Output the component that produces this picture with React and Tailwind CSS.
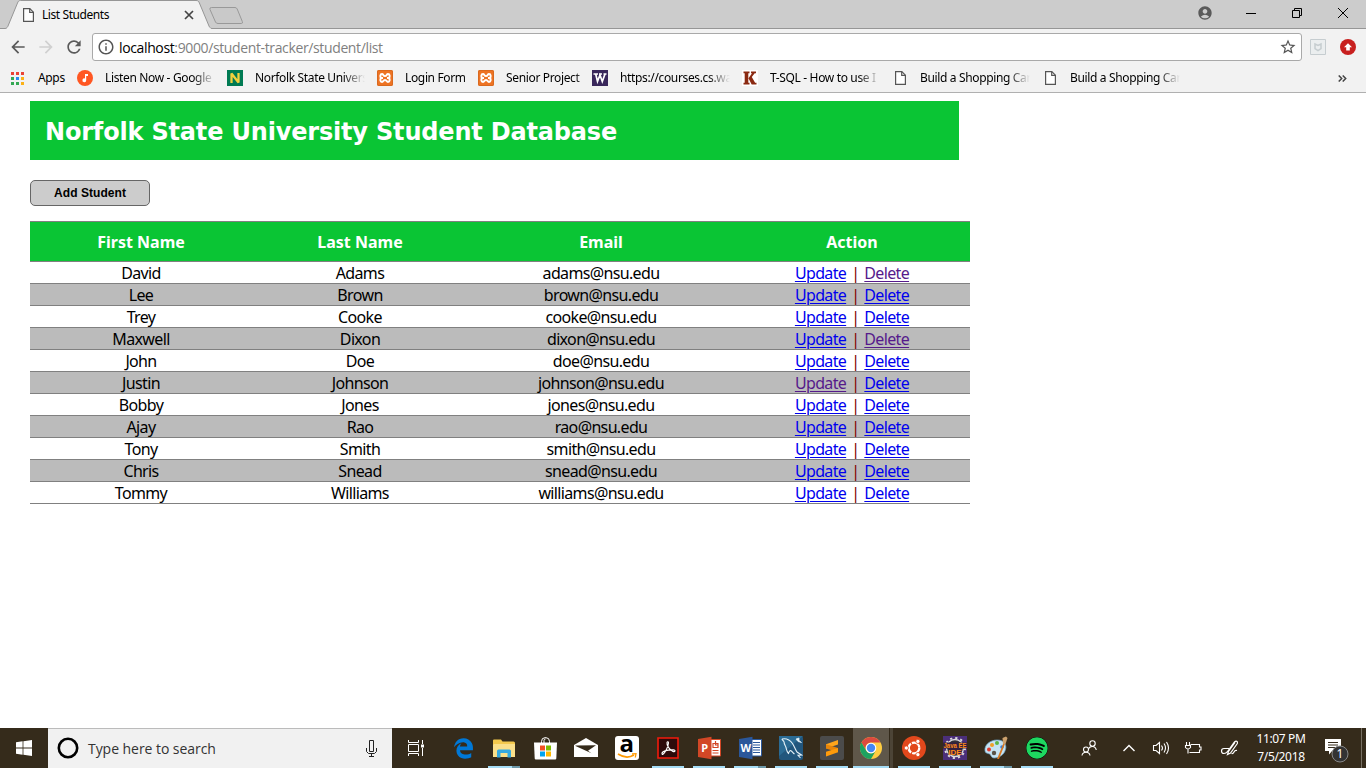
import { MdAccountCircle, MdArrowBack, MdArrowForward, MdRefresh, MdInfoOutline, MdStarBorder } from "react-icons/md";
import { FaEdgeLegacy, FaSpotify } from "react-icons/fa";

const students = [
  ["David", "Adams", "adams@nsu.edu", false, true],
  ["Lee", "Brown", "brown@nsu.edu"],
  ["Trey", "Cooke", "cooke@nsu.edu"],
  ["Maxwell", "Dixon", "dixon@nsu.edu", false, true],
  ["John", "Doe", "doe@nsu.edu"],
  ["Justin", "Johnson", "johnson@nsu.edu", true, false],
  ["Bobby", "Jones", "jones@nsu.edu"],
  ["Ajay", "Rao", "rao@nsu.edu"],
  ["Tony", "Smith", "smith@nsu.edu"],
  ["Chris", "Snead", "snead@nsu.edu"],
  ["Tommy", "Williams", "williams@nsu.edu"],
];

function PageIcon() {
  return (
    <svg width="11" height="14" viewBox="0 0 11 14" fill="#fff" stroke="#555" strokeWidth="1.2">
      <path d="M.6.6h6.2l3.6 3.6v9.2H.6z" />
      <path d="M6.7.8v3.6h3.6" fill="none" />
    </svg>
  );
}

function Xampp() {
  return (
    <span className="flex size-4 items-center justify-center rounded-[2px] bg-[#ee7424] ring-1 ring-inset ring-[#d9691f]">
      <svg width="12" height="12" viewBox="0 0 12 12" fill="none" stroke="#fff" strokeWidth="2" strokeLinejoin="round">
        <path d="M2 6C1 5 1 2 3 2c1.600 0 1 2 3 2s1.400-2 3-2c2 0 2 3 1 4 1 1 1 4-1 4-1.600 0-1-2-3-2s-1.400 2-3 2c-2 0-2-3-1-4zM2 6h2M8 6h2" />
      </svg>
    </span>
  );
}

function Bookmark({ icon, label, className = "w-[150px]" }) {
  return (
    <div className={`flex shrink-0 items-center ${className}`}>
      <span className="flex w-4 shrink-0 justify-center">{icon}</span>
      <span className="ml-3 w-[110px] overflow-hidden whitespace-nowrap mask-r-from-80% mask-r-to-100%">{label}</span>
    </div>
  );
}

function TabStrip() {
  return (
    <div className="relative flex h-[29px] items-start bg-[#cccccc]">
      <svg className="absolute inset-0" width="1366" height="29" viewBox="0 0 1366 29">
        <path d="M0 28.500H5C7 28.500 7.500 27 8 26L17.500 3C18.200 1.200 19 .5 20.500.5H196C198 .5 198.700 1.200 199.400 3L209 26C209.700 27.700 210.500 28.500 212 28.500H1366V30H0z" fill="#f2f2f2" stroke="#969696" />
        <path d="M7 28.500H210.500" stroke="#f2f2f2" strokeWidth="1.400" />
        <path d="M211.500 7.500H235Q236.500 7.500 237.200 9L242.300 21.500Q243 23.500 241.500 23.500H218Q216.200 23.500 215.500 22L210 9.500Q209.300 7.500 211.500 7.500z" fill="#c9c9c9" stroke="#999" />
      </svg>
      <div className="relative flex h-[29px] w-[199px] items-center pl-[23px] pt-px">
        <PageIcon />
        <span className="ml-2 flex-1 text-[12px] tracking-[-0.42px] text-black">List Students</span>
        <svg width="10" height="10" viewBox="0 0 10 10" stroke="#444" strokeWidth="1.700" className="mr-[5px]">
          <path d="M1 1l8 8M9 1L1 9" />
        </svg>
      </div>
      <div className="relative ml-auto flex h-[26px] items-center">
        <MdAccountCircle className="mr-[33px] size-4 text-[#5a5a5a]" />
        <svg width="102" height="12" viewBox="0 0 102 12" className="mr-[18px]" fill="none" stroke="#000">
          <path d="M0 6.500h10M46.500 3.500h7v7h-7zM48.500 3.500v-2h7v7h-2M92 1l10 10M102 1L92 11" />
        </svg>
      </div>
    </div>
  );
}

function Toolbar() {
  return (
    <div className="flex h-8 items-center pt-1">
      <MdArrowBack className="ml-2 size-5 text-[#5a5a5a]" />
      <MdArrowForward className="ml-2 size-5 text-[#d0d0d0]" />
      <MdRefresh className="ml-2 size-5 text-[#5a5a5a]" />
      <div className="ml-2 flex h-7 w-[1210px] items-center rounded-[3px] border border-[#a9a9a9] bg-white">
        <MdInfoOutline className="ml-1 size-[18px] text-[#555]" />
        <span className="ml-1 flex-1 font-['Open_Sans',sans-serif] text-[14px] tracking-[-0.37px] text-[#7f7f7f]">
          <span className="text-black">localhost</span>:9000/student-tracker/student/list
        </span>
        <MdStarBorder className="mr-1 size-[18px] text-[#555]" />
      </div>
      <svg width="16" height="16" viewBox="0 0 16 16" className="ml-2" fill="none" stroke="#c6cdd0">
        <path d="M.5.5h15v15H.5z" fill="#ebeeef" />
        <path d="M5 5v4.500l3 2 3-2V5L8 6.500z" strokeWidth="1.500" />
      </svg>
      <svg width="16" height="16" viewBox="0 0 16 16" className="ml-[14px]">
        <circle cx="8" cy="8" r="8" fill="#c8201f" />
        <path d="M8 4.200L12 8.300H9.800V11.500H6.200V8.300H4z" fill="#fff" />
      </svg>
    </div>
  );
}

function Bookmarks() {
  return (
    <div className="flex h-8 items-center border-b border-[#b0b0b0] pl-[11px] pt-[3px] text-[12px] tracking-[-0.35px] text-black">
      <svg width="13" height="13" viewBox="0 0 13 13">
        <path d="M0 0h3v3H0zM5 0h3v3H5zM10 0h3v3h-3z" fill="#ea4335" />
        <path d="M0 5h3v3H0zM0 10h3v3H0zM5 10h3v3H5z" fill="#34a853" />
        <path d="M5 5h3v3H5z" fill="#2a8cf0" />
        <path d="M10 5h3v3h-3zM10 10h3v3h-3z" fill="#fbb116" />
      </svg>
      <span className="ml-[14px] w-[39px]">Apps</span>
      <Bookmark
        label="Listen Now - Google"
        icon={
          <svg width="16" height="16" viewBox="0 0 16 16">
            <circle cx="8" cy="8" r="8" fill="#ff5722" />
            <path d="M8 4h3v2H9.200v4.200A1.900 1.900 0 1 1 8 8.500z" fill="#fff" />
          </svg>
        }
      />
      <Bookmark
        label="Norfolk State Univers"
        icon={
          <svg width="16" height="16" viewBox="0 0 16 16">
            <path d="M0 0h16v16H0z" fill="#007a53" />
            <path d="M4.500 13V3.500l7 9V3" fill="none" stroke="#f3d03e" strokeWidth="2.300" strokeLinejoin="bevel" />
          </svg>
        }
      />
      <Bookmark label="Login Form" className="w-[101px]" icon={<Xampp />} />
      <Bookmark label="Senior Project" className="w-[114px]" icon={<Xampp />} />
      <Bookmark
        label="https://courses.cs.was"
        icon={
          <svg width="16" height="16" viewBox="0 0 16 16">
            <path d="M0 0h16v16H0z" fill="#39275b" />
            <path d="M1.500 4h4.500M7 4h3M11.500 4h3M3.700 4l1.800 7.500L8 5l2.300 6.500L13 4" fill="none" stroke="#fff" strokeWidth="1.700" />
          </svg>
        }
      />
      <Bookmark
        label="T-SQL - How to use I"
        icon={
          <svg width="16" height="16" viewBox="0 0 16 16">
            <path d="M0 0h16v16H0z" fill="#fff" />
            <path d="M1.500 1.500h6v1.700H6.300v9.600h1.200v1.700h-6v-1.700h1.200V3.200H1.500zM9 1.500h5v1.700h-1.300L9.800 7l3.300 5.800h1.400v1.700H9.700L6.500 8.200 10 3.200H9z" fill="#8b2a12" />
          </svg>
        }
      />
      <Bookmark label="Build a Shopping Cart" icon={<PageIcon />} />
      <Bookmark label="Build a Shopping Cart" icon={<PageIcon />} />
      <svg width="9" height="7" viewBox="0 0 9 7" className="ml-auto mr-[19px]" fill="none" stroke="#444" strokeWidth="1.500">
        <path d="M.7.5l3 3-3 3M4.700.5l3 3-3 3" />
      </svg>
    </div>
  );
}

function ActionLink({ visited, children }) {
  return (
    <a href="#" className={`underline decoration-1 underline-offset-2 ${visited ? "text-[#551a8b]" : "text-[#0000ee]"}`}>
      {children}
    </a>
  );
}

function StudentPage() {
  return (
    <main className="h-[635px] bg-white pl-[30px] pt-2">
      <h1 className="flex h-[59px] w-[929px] items-center bg-[#0ac534] pl-[15px] pt-0.5 font-['DejaVu_Sans',sans-serif] text-[24px] font-bold tracking-[-0.18px] text-white">
        Norfolk State University Student Database
      </h1>
      <button className="mt-5 flex h-[26px] w-[120px] items-center justify-center rounded-[5px] border border-[#666] bg-[#ccc] font-['Liberation_Sans',sans-serif] text-[12px] font-bold tracking-[0.05px] text-black">
        Add Student
      </button>
      <table className="mt-[15px] w-[940px] table-fixed border-separate border-spacing-0 text-center text-[16px] leading-[20px] tracking-[-0.65px] text-black">
        <colgroup>
          <col className="w-[222px]" />
          <col className="w-[216px]" />
          <col className="w-[266px]" />
          <col className="w-[236px]" />
        </colgroup>
        <thead>
          <tr className="bg-[#0ac534] tracking-[0px] text-white">
            {["First Name", "Last Name", "Email", "Action"].map((h) => (
              <th key={h} className="h-[41px] border-y border-[#808080] p-0 pt-px font-bold">{h}</th>
            ))}
          </tr>
        </thead>
        <tbody>
          {students.map(([first, last, email, updateVisited, deleteVisited]) => (
            <tr key={email} className="even:bg-[#bbbbbb]">
              <td className="h-[22px] border-b border-[#808080] p-0 pt-px">{first}</td>
              <td className="border-b border-[#808080] p-0 pt-px">{last}</td>
              <td className="border-b border-[#808080] p-0 pt-px">{email}</td>
              <td className="border-b border-[#808080] p-0 pt-px text-[#800000]">
                <ActionLink visited={updateVisited}>Update</ActionLink>
                <span className="px-[5px]">|</span>
                <ActionLink visited={deleteVisited}>Delete</ActionLink>
              </td>
            </tr>
          ))}
        </tbody>
      </table>
    </main>
  );
}

function TaskButton({ running, split, active, children }) {
  return (
    <div className={`relative flex h-10 w-10 shrink-0 items-center justify-center ${active ? "bg-[#5f574a] pr-1" : ""}`}>
      {children}
      {running && <span className={`absolute bottom-0 h-0.5 bg-[#a5dcf5] ${active ? "inset-x-0" : "inset-x-1"}`} />}
      {split && <span className="absolute bottom-0 right-1 h-0.5 w-2 bg-[#6d98a8]" />}
      {active && <span className="absolute inset-y-0 right-0 w-1 border-l border-[#332a1b] bg-[#4c4436]" />}
    </div>
  );
}

function OfficeIcon({ color, letter, children }) {
  return (
    <svg width="23" height="24" viewBox="0 0 23 24">
      <path d="M12 3.500h10.500v16.500H12z" fill="#fff" stroke={color} />
      {children}
      <path d="M0 3L13.500.8v22.400L0 21z" fill={color} />
      <text x="6.700" y="16" textAnchor="middle" fontSize="11" fontWeight="700" fontFamily="Noto Sans, sans-serif" fill="#fff">{letter}</text>
    </svg>
  );
}

function Taskbar() {
  return (
    <footer className="flex h-10 items-center bg-[#352b1b] text-white">
      <div className="flex w-12 justify-center">
        <svg width="16" height="16" viewBox="0 0 16 16" fill="#fff">
          <path d="M0 2.200L6.600 1.300v6.300H0zM7.400 1.200L16 0v7.600H7.400zM0 8.400h6.600v6.300L0 13.800zM7.400 8.400H16V16l-8.600-1.200z" />
        </svg>
      </div>
      <div className="flex h-10 w-[344px] items-center border-t border-[#bbb] bg-[#f1f1f1] pl-[9px] text-[#333]">
        <svg width="22" height="22" viewBox="0 0 22 22" className="-mt-px"><circle cx="11" cy="11" r="9.200" fill="none" stroke="#000" strokeWidth="2.600" /></svg>
        <span className="ml-[9px] flex-1 font-['Open_Sans',sans-serif] text-[14px] tracking-[-0.05px]">Type here to search</span>
        <svg width="13" height="17" viewBox="0 0 13 17" className="mr-[14px]" fill="none" stroke="#222">
          <path d="M4.500.5h4v11h-4zM1.500 8v3.500l2 2h6l2-2V8M6.500 13.500v3M4 16.500h5" />
        </svg>
      </div>
      <svg width="17" height="16" viewBox="0 0 17 16" className="ml-4" fill="none" stroke="#fff">
        <path d="M.5 0v2.500h10V0M.5 4.500h10v7H.5zM.5 16v-2.500h10V16M14.500 0v4M14.500 8v8" />
        <path d="M13 4.500h3v3h-3z" fill="#fff" stroke="none" />
      </svg>
      <div className="ml-[18px] flex gap-px">
        <TaskButton><FaEdgeLegacy className="size-[21px] text-[#0078d7]" /></TaskButton>
        <TaskButton running split>
          <svg width="22" height="19" viewBox="0 0 22 19">
            <path d="M0 1.500Q0 .5 1 .5h7l1.500 2H20.500Q22 2.500 22 4v14H0z" fill="#f4c94e" />
            <path d="M1 5h21v13H0V6z" fill="#fbe08b" />
            <path d="M4 18.500V12q0-1.500 1.500-1.500h11q1.500 0 1.500 1.500v6.500h-3.500V14h-7v4.500z" fill="#35a9e1" />
          </svg>
        </TaskButton>
        <TaskButton>
          <svg width="23" height="23" viewBox="0 0 23 23">
            <path d="M7.500 6V4.500Q7.500.7 11 .7h1Q15.500.7 15.500 4.500V6M10 6V3.500Q10 2 11.500 2" fill="none" stroke="#fff" />
            <path d="M0 5.500h23l-.7 16q-.1 1-1.100 1H1.800q-1 0-1.100-1z" fill="#fff" />
            <path d="M6 8.500h5v5H6z" fill="#f25022" /><path d="M12 8.500h5v5h-5z" fill="#7fba00" />
            <path d="M6 14.500h5v5H6z" fill="#00a4ef" /><path d="M12 14.500h5v5h-5z" fill="#ffb900" />
          </svg>
        </TaskButton>
        <TaskButton>
          <svg width="24" height="20" viewBox="0 0 24 20"><path d="M0 7L12 0l12 7v12H0z" fill="#fff" /><path d="M1.500 7.500L22 7.200l-8 5.500 3.500 2.600L1.500 8z" fill="#352b1b" /></svg>
        </TaskButton>
        <TaskButton>
          <svg width="24" height="24" viewBox="0 0 24 24">
            <rect width="24" height="24" rx="3" fill="#fff" />
            <text x="11.700" y="16" textAnchor="middle" fontSize="24" fontWeight="700" fontFamily="Open Sans, sans-serif" fill="#000">a</text>
            <path d="M3 18q8.500 5.500 16 1" fill="none" stroke="#ff9900" strokeWidth="1.700" />
            <path d="M17 18l4-.3-.7 3.800" fill="none" stroke="#ff9900" strokeWidth="1.300" />
          </svg>
        </TaskButton>
        <TaskButton running>
          <svg width="22" height="22" viewBox="0 0 22 22">
            <path d="M1 1h20v20H1z" fill="#2d0b0b" stroke="#f21b0c" strokeWidth="1.600" />
            <path d="M5 16.500c0-2.500 6-4 11.500-3.600 2.500.4 1.700 2.200-.6 1.500C12.500 13 9.500 8 10 5.500c.2-1.200 1.600-1 1.500.5C11.300 9.500 8 16 6 17.200c-.6.400-1 0-1-.7z" fill="none" stroke="#fff" strokeWidth="1.100" />
          </svg>
        </TaskButton>
        <TaskButton running>
          <OfficeIcon color="#d24726" letter="P"><path d="M15 7.500h5v4h-5zM14.500 14.500h6M14.500 17h6M17.500 5v4h3" fill="none" stroke="#d24726" strokeWidth="1.200" /></OfficeIcon>
        </TaskButton>
        <TaskButton running split>
          <OfficeIcon color="#2b579a" letter="W"><path d="M14 6.500h7M14 9h7M14 11.500h7M14 14h7M14 16.500h7" stroke="#2b579a" /></OfficeIcon>
        </TaskButton>
        <TaskButton running>
          <svg width="24" height="24" viewBox="0 0 24 24" fill="none" stroke="#e6f2f8">
            <rect width="24" height="24" rx="2" fill="#21567d" stroke="none" />
            <path d="M0 0h24L0 20z" fill="#2b6b94" stroke="none" />
            <path d="M3 3c4.500-1 8 1 10.500 4.500 2 3 3 6.500 4.500 8.500l4.500 3-3.500.3 2.500 2.700M5 5.500C4 4.500 3 4 3 3M5 5.500c0 3 1.500 4 2 6s1 5 2.500 6c.5-1.500.8-3 2-3 2 1 2.500 2.500 4 3.500" strokeWidth="1.100" />
            <path d="M17 3l2 2.500 3.500 1L20 4.500V2z" fill="#e6f2f8" strokeWidth=".7" />
          </svg>
        </TaskButton>
        <TaskButton running>
          <svg width="24" height="24" viewBox="0 0 24 24">
            <rect width="24" height="24" rx="2" fill="#4b4b4b" />
            <path d="M6 8.300L18 4v4.500l-12 4z" fill="#ffa51c" /><path d="M6 8.300v4.200l12 3.700v-4.200z" fill="#e8850a" /><path d="M6 15.800l12-3.800v4.200L6 20.500z" fill="#ff9b0b" />
          </svg>
        </TaskButton>
        <TaskButton running active>
          <svg width="22" height="22" viewBox="0 0 22 22">
            <circle cx="11" cy="11" r="11" fill="#ffcd41" />
            <path d="M1.470 5.500A11 11 0 0 1 20.530 5.500H11A5.500 5.500 0 0 0 6.240 13.750z" fill="#dc4a3f" />
            <path d="M1.470 5.500A11 11 0 0 0 11 22L15.760 13.750A5.500 5.500 0 0 1 6.240 13.750z" fill="#1ca261" />
            <circle cx="11" cy="11" r="5.300" fill="#fff" /><circle cx="11" cy="11" r="4.200" fill="#4587f3" />
          </svg>
        </TaskButton>
        <TaskButton running>
          <svg width="24" height="24" viewBox="0 0 24 24">
            <circle cx="12" cy="12" r="12" fill="#e2481c" />
            <circle cx="12" cy="12" r="5.300" fill="none" stroke="#fff" strokeWidth="2.300" strokeDasharray="10 1.100" />
            <g fill="#fff" stroke="#e2481c" strokeWidth=".8"><circle cx="4.300" cy="12" r="2.100" /><circle cx="15.900" cy="5.400" r="2.100" /><circle cx="15.900" cy="18.600" r="2.100" /></g>
          </svg>
        </TaskButton>
        <TaskButton running>
          <svg width="24" height="24" viewBox="0 0 24 24">
            <path d="M0 0h24v24H0z" fill="#4b2f7a" />
            <circle cx="12" cy="12" r="8.500" fill="#333039" stroke="#ddd" strokeWidth="1.300" />
            <circle cx="12" cy="12" r="10" fill="none" stroke="#ddd" strokeWidth="2" strokeDasharray="2.200 3.030" />
            <path d="M0 6.500h24v6H0zM5.500 12.500h13v6h-13z" fill="#33203f" />
            <g fill="#ff8b1a" fontSize="8" fontWeight="700" fontFamily="Liberation Sans, sans-serif" textAnchor="middle"><text x="12" y="12" textLength="23" lengthAdjust="spacingAndGlyphs">Java EE</text><text x="12" y="18.500">IDE</text></g>
          </svg>
        </TaskButton>
        <TaskButton running split>
          <svg width="24" height="24" viewBox="0 0 24 24">
            <path d="M1 15C0 9 6 4 13 4c7-.2 10 5 8.500 9.500C20 19 15 22 10 22c-3 0-2.500-3-4.500-4S1.500 17.500 1 15z" fill="#c6e3f3" stroke="#6ca5c8" strokeWidth=".7" />
            <circle cx="5" cy="13.500" r="2" fill="#e03a2f" /><circle cx="8" cy="9" r="2" fill="#f0a028" /><circle cx="13" cy="7" r="2" fill="#5bb646" /><circle cx="18" cy="11" r="1.800" fill="#3a80d8" /><circle cx="10" cy="17" r="2.200" fill="#5a5348" />
            <path d="M13 23L19.500 7l1.500.7L15 23z" fill="#d77a24" /><path d="M19 8L18.500 2 22 .5 23.500 2 21.500 8z" fill="#cda26e" />
          </svg>
        </TaskButton>
        <TaskButton running><FaSpotify className="size-[22px] rounded-full bg-black text-[#1ed760]" /></TaskButton>
      </div>
      <div className="ml-auto flex items-center">
        <svg width="157" height="18" viewBox="1081 739 157 18" className="mr-[10px]" fill="none" stroke="#fff" strokeWidth="1.100">
          <circle cx="1092.500" cy="743.500" r="2.700" /><path d="M1088.500 749.500q.5-3 4-3 3 0 3.800 3.500" /><circle cx="1086" cy="749.500" r="2.500" /><path d="M1082 755.500q.5-3.300 4-3.300t4 3.300" />
          <path d="M1123.500 751l5.500-5.500 5.500 5.500" strokeWidth="1.400" />
          <path d="M1153.500 745.500h2.500l3.500-3v11l-3.500-3h-2.500zM1161.500 745.500q2 2.500 0 5M1164 743.500q3 4.500 0 9M1166.500 742q4 6 0 12" />
          <path d="M1190.500 744.500h9v2.500h1.500v3h-1.500v2.500h-10M1186.500 742v3M1189.500 742v3M1185.500 745.500h5v2q-2.500 3-5 0zM1188 749v4.500" />
          <path d="M1229 748.500h-5q-2.500 0-2.500 2.500t2.500 2.500q2 0 3.500-2l7-9.500q1.500-1.500 2.500-.5t0 2.500l-6.500 9-3 1.500 1-3 6.500-9M1231.500 753.500q1.500.5 2.500-1.500t3-1.500" strokeWidth="1.200" />
        </svg>
        <div className="w-[66px] text-center text-[12px] leading-[18px] tracking-[-0.35px]">
          <div>11:07 PM</div>
          <div>7/5/2018</div>
        </div>
        <svg width="26" height="26" viewBox="0 0 26 26" className="ml-[10px] mt-[5px]">
          <path d="M1 1h16v12H8l-3 3.500V13H1z" fill="#fff" />
          <path d="M4 4.500h10M4 7h10M4 9.500h7" stroke="#352b1b" />
          <circle cx="16" cy="16" r="8" fill="#333" stroke="#888" />
          <text x="16" y="20.300" textAnchor="middle" fontSize="12" fontFamily="Noto Sans, sans-serif" fill="#fff">1</text>
        </svg>
        <span className="ml-[11px] mr-1 h-10 w-px bg-[#777063]" />
      </div>
    </footer>
  );
}

export default function App() {
  return (
    <div className="flex h-[768px] w-[1366px] flex-col overflow-hidden bg-white font-['Noto_Sans',sans-serif]">
      <header className="bg-[#f2f2f2]">
        <TabStrip />
        <Toolbar />
        <Bookmarks />
      </header>
      <StudentPage />
      <Taskbar />
    </div>
  );
}
